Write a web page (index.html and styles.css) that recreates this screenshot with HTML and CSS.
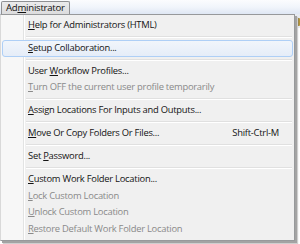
FILE: index.html
```html
<!DOCTYPE html>
<html lang="en">
<head>
    <meta charset="UTF-8">
    <title>Administrator Menu</title>
    <link rel="stylesheet" href="styles.css">
</head>
<body>
    <div class="app">
        <!-- Menu bar -->
        <div class="menubar">
            <span class="menubar-item open">Ad<u>m</u>inistrator</span>
        </div>

        <!-- Toolbar behind the open menu -->
        <div class="toolbar">
            <span class="tool-icon"></span>
        </div>

        <!-- Dropdown -->
        <ul class="menu">
            <li class="menu-item"><span class="label"><u>H</u>elp for Administrators (HTML)</span></li>
            <li class="menu-sep"></li>
            <li class="menu-item hover"><span class="label"><u>S</u>etup Collaboration...</span></li>
            <li class="menu-sep"></li>
            <li class="menu-item"><span class="label">User <u>W</u>orkflow Profiles...</span></li>
            <li class="menu-item disabled"><span class="label"><u>T</u>urn OFF the current user profile temporarily</span></li>
            <li class="menu-sep"></li>
            <li class="menu-item"><span class="label"><u>A</u>ssign Locations For Inputs and Outputs...</span></li>
            <li class="menu-sep"></li>
            <li class="menu-item"><span class="label"><u>M</u>ove Or Copy Folders Or Files...</span><span class="shortcut">Shift-Ctrl-M</span></li>
            <li class="menu-sep"></li>
            <li class="menu-item"><span class="label">Set <u>P</u>assword...</span></li>
            <li class="menu-sep"></li>
            <li class="menu-item"><span class="label"><u>C</u>ustom Work Folder Location...</span></li>
            <li class="menu-item disabled"><span class="label"><u>L</u>ock Custom Location</span></li>
            <li class="menu-item disabled"><span class="label"><u>U</u>nlock Custom Location</span></li>
            <li class="menu-item disabled"><span class="label"><u>R</u>estore Default Work Folder Location</span></li>
        </ul>
    </div>
</body>
</html>
```

FILE: styles.css
```css
body {
    margin: 0;
    padding: 0;
    background: #ffffff;
    font-family: "Open Sans", "Noto Sans", sans-serif;
    font-size: 9.4px;
    letter-spacing: -0.25px;
    color: #141414;
}

.app {
    position: relative;
    width: 300px;
    height: 244px;
    overflow: hidden;
}

/* Menu bar */
.menubar {
    height: 14px;
    background: linear-gradient(#fbfcfe, #f1f5fb 50%, #dfe7f4);
    display: flex;
    align-items: flex-start;
}

.menubar-item {
    margin: 1px 0 0 1px;
    padding: 0 4px 0 4px;
    height: 12px;
    line-height: 12px;
    font-size: 9.6px;
    color: #111;
}

.menubar-item.open {
    border: 1px solid #8f9093;
    border-bottom: none;
    border-radius: 2px 2px 0 0;
    background: linear-gradient(#ebebec, #dcdcdd);
}

.toolbar {
    height: 14px;
    background: #e7ebf1;
    display: flex;
    justify-content: flex-end;
}

.tool-icon {
    width: 4px;
    height: 8px;
    margin-top: 4px;
    background: linear-gradient(90deg, #3a3420, #c9a43a);
    border-radius: 1px;
}

/* Dropdown menu */
.menu {
    position: absolute;
    top: 14px;
    left: 0;
    width: 293px;
    height: 223px;
    margin: 0;
    padding: 2px 0 0 0;
    list-style: none;
    border: 1px solid #97999b;
    border-left-color: #d9d9d9;
    background: linear-gradient(90deg, #f7f7f7 22px, #e2e3e3 22px, #e2e3e3 23px, #ffffff 23px, #ffffff 24px, #f0f0f0 24px);
    box-shadow: 2px 2px 0 #a3a3a3, 3px 3px 1px #cfcfcf;
}

.menu-item {
    display: flex;
    align-items: center;
    height: 16.7px;
    line-height: 16.7px;
    padding: 0 13px 0 26px;
    margin: 0 1px;
    white-space: nowrap;
    box-sizing: border-box;
    border: 1px solid transparent;
}

.menu-item .label {
    flex-grow: 1;
    margin-left: -1px;
}

.menu-item .shortcut {
    text-align: right;
}

.menu-item.hover {
    border-color: #aecff6;
    border-radius: 3px;
    background: linear-gradient(#f1f5fb, #e5edf8);
}

.menu-item.disabled {
    color: #8a8a8a;
}

.menu-sep {
    height: 6.2px;
    margin-left: 25px;
    margin-right: 2px;
    display: flex;
    flex-direction: column;
    justify-content: center;
}

.menu-sep::before {
    content: "";
    display: block;
    height: 1px;
    background: #e0e0e0;
    border-bottom: 1px solid #ffffff;
}

u {
    text-decoration-thickness: 1px;
    text-underline-offset: 1px;
}
```
